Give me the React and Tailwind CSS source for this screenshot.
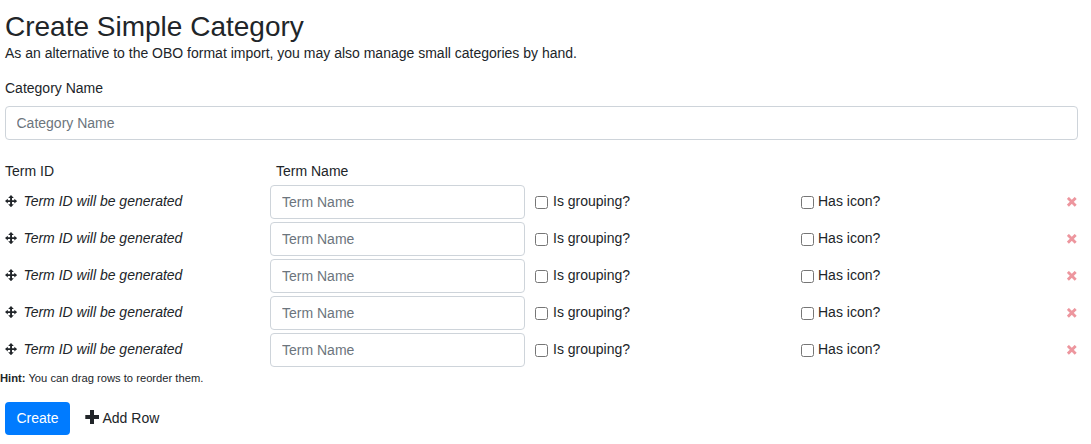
import React from 'react';

function MoveIcon() {
  return (
    <svg viewBox="0 0 12 12" className="block h-[12px] w-[12px] fill-current" aria-hidden="true">
      <path d="M6 0L8.8 3H7V5.2H9.3V3.7L12.2 6.1L9.3 8.5V7H7V9.2H8.8L6 12.2L3.2 9.2H5.1V7H2.8V8.5L0 6.1L2.8 3.7V5.2H5.1V3H3.2z" />
    </svg>
  );
}

function Check({ label, gap }) {
  return (
    <label className="flex h-[34px] items-start pt-[6px]">
      <input type="checkbox" className={`mt-[5px] h-[13px] w-[13px] ${gap}`} />
      <span>{label}</span>
    </label>
  );
}

function TermRow() {
  return (
    <div className="mb-[3px] grid h-[34px] grid-cols-[265px_265px_266px_266px_1fr]">
      <div className="flex items-start pt-[6px]">
        <span className="mt-[4px]"><MoveIcon /></span>
        <span className="ml-[6.4px] italic">Term ID will be generated</span>
      </div>
      <input
        placeholder="Term Name"
        className="h-[34px] w-[255px] rounded-[4px] border border-[#ced4da] px-[11px] placeholder:text-[#6c757d]"
      />
      <Check label="Is grouping?" gap="mr-[5px]" />
      <Check label="Has icon?" gap="mr-[4px]" />
      <button aria-label="Remove row" className="mt-[12px] h-[10px] w-[10px] text-[#ed969e]">
        <svg viewBox="0 0 10 10" className="block h-[10px] w-[10px] fill-none stroke-current stroke-[2.8]" aria-hidden="true">
          <path d="M.9 .9L8.7 8.7M8.7 .9L.9 8.7" />
        </svg>
      </button>
    </div>
  );
}

export default function App() {
  return (
    <form className="h-[444px] overflow-hidden bg-white font-['Liberation_Sans',Arial,sans-serif] text-[14px] leading-[21px] text-[#212529]">
      <header className="px-[5px] pt-[10px]">
        <h2 className="text-[28px] leading-[33px]">Create Simple Category</h2>
        <p>As an alternative to the OBO format import, you may also manage small categories by hand.</p>
      </header>
      <div className="mt-[14px] pl-[5px] pr-[13px]">
        <label className="block">Category Name</label>
        <input
          placeholder="Category Name"
          className="mt-[7px] block h-[34px] w-full rounded-[4px] border border-[#ced4da] px-[10.5px] placeholder:text-[#6c757d]"
        />
      </div>
      <div className="pl-[5px] pt-[21px]">
        <div className="grid h-[24px] grid-cols-[271px_1fr]">
          <span>Term ID</span>
          <span>Term Name</span>
        </div>
        {Array.from({ length: 5 }, (_, i) => <TermRow key={i} />)}
      </div>
      <p className="text-[11.2px] leading-[17px]"><strong>Hint:</strong> You can drag rows to reorder them.</p>
      <div className="mt-[15px] flex h-[33px] items-center pl-[5px]">
        <button type="button" className="h-[33px] w-[65px] rounded-[4px] bg-[#007bff] text-white">Create</button>
        <button type="button" className="ml-[15px] flex items-center">
          <svg viewBox="0 0 14 14" className="mr-[3.5px] mb-[3px] h-[14px] w-[14px] overflow-visible fill-current" aria-hidden="true">
            <path d="M5 0h4v5h5v4H9v5H5V9H.3V5H5z" />
          </svg>
          Add Row
        </button>
      </div>
    </form>
  );
}
